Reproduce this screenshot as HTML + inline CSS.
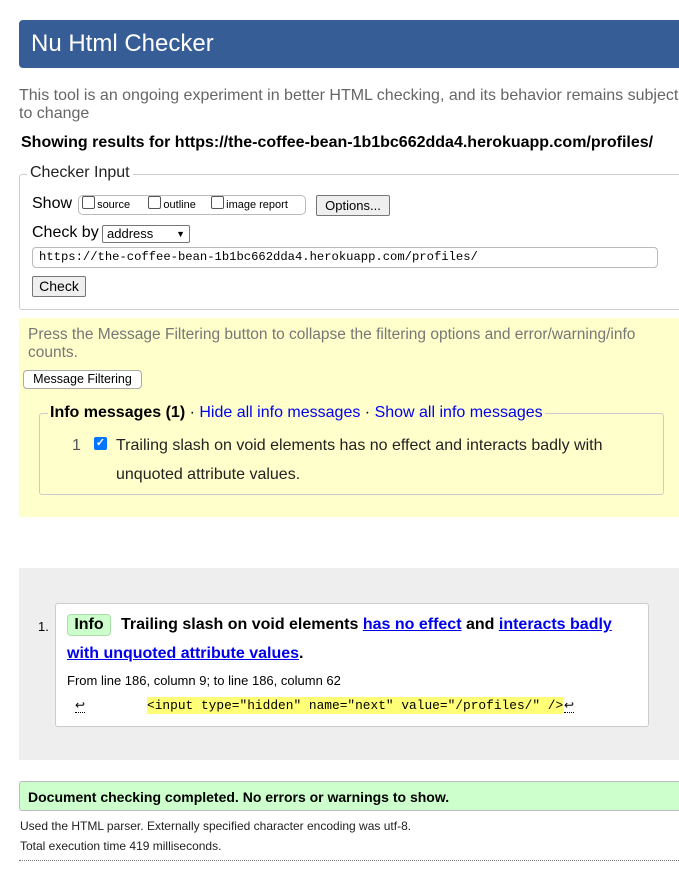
<!DOCTYPE html>
<html><head><meta charset="utf-8"><style>
body{margin:0;width:679px;height:880px;overflow:hidden;background:#fff;font-family:"Liberation Sans",Arial,sans-serif;position:relative;color:#000}
.a{position:absolute;white-space:nowrap}
.mono{font-family:"Liberation Mono",monospace}
.cb{display:inline-block;width:11px;height:11px;border:1px solid #555;border-radius:2px;background:#fff;vertical-align:-1px;margin-right:2px}
.btn{position:absolute;border:1px solid #767676;background:#efefef;border-radius:2px;font-size:13px;text-align:center}
a{color:#00e}
</style></head><body>
<div class="a" style="left:19px;top:20px;width:660px;height:48px;background:#365d95;border-radius:4px 0 0 4px"></div>
<div class="a" style="left:31px;top:30px;font-size:24px;color:#fff">Nu Html Checker</div>
<div class="a" style="left:19px;top:87px;font-size:16px;color:#666;line-height:18px">This tool is an ongoing experiment in better HTML checking, and its behavior remains subject<br>to change</div>
<div class="a" style="left:21px;top:134px;font-size:16px;font-weight:bold">Showing results for https://the-coffee-bean-1b1bc662dda4.herokuapp.com/profiles/</div>

<div class="a" style="left:19px;top:174px;width:670px;height:134px;border:1px solid #ccc;border-radius:3px"></div>
<div class="a" style="left:27px;top:164px;font-size:16px;background:#fff;padding:0 3px;color:#222">Checker Input</div>
<div class="a" style="left:32px;top:195px;font-size:16px">Show</div>
<div class="a" style="left:78px;top:195px;width:226px;height:18px;border:1px solid #bbb;border-radius:5px;font-size:11px;line-height:18px">&nbsp;<span class="cb"></span>source &nbsp;&nbsp;&nbsp;&nbsp;&nbsp;<span class="cb"></span>outline &nbsp;&nbsp;&nbsp;&nbsp;<span class="cb"></span>image report</div>
<div class="btn" style="left:316px;top:195px;width:72px;height:19px;line-height:19px">Options...</div>
<div class="a" style="left:32px;top:224px;font-size:16px">Check by</div>
<div class="a" style="left:102px;top:225px;width:82px;height:16px;border:1px solid #767676;border-radius:2px;font-size:13px;line-height:16px;padding-left:4px">address<span style="position:absolute;right:4px;font-size:9px">&#9660;</span></div>
<div class="a mono" style="left:32px;top:247px;width:618px;height:19px;border:1px solid #bbb;border-radius:4px;font-size:12.2px;line-height:19px;padding-left:6px">https://the-coffee-bean-1b1bc662dda4.herokuapp.com/profiles/</div>
<div class="btn" style="left:32px;top:276px;width:52px;height:19px;line-height:19px;font-size:14px">Check</div>

<div class="a" style="left:19px;top:318px;width:660px;height:199px;background:#ffffcc"></div>
<div class="a" style="left:28px;top:326px;font-size:15.5px;color:#777;line-height:18px">Press the Message Filtering button to collapse the filtering options and error/warning/info<br>counts.</div>
<div class="a" style="left:23px;top:370px;width:117px;height:17px;border:1px solid #aaa;border-radius:4px;background:#fff;font-size:12.5px;line-height:17px;text-align:center">Message Filtering</div>
<div class="a" style="left:39px;top:413px;width:623px;height:80px;border:1px solid #ccc;border-radius:3px"></div>
<div class="a" style="left:48px;top:404px;font-size:16px;background:#ffffcc;padding:0 2px"><b>Info messages (1)</b> · <span style="color:#00e">Hide all info messages</span> · <span style="color:#00e">Show all info messages</span></div>
<div class="a" style="left:72px;top:437px;font-size:16px;color:#555">1</div>
<div class="a" style="left:94px;top:437px;width:13px;height:13px;background:#0075ff;border-radius:2px;color:#fff;font-size:11px;line-height:13px;text-align:center;font-weight:bold">✓</div>
<div class="a" style="left:116px;top:431px;font-size:16px;line-height:29px;color:#222">Trailing slash on void elements has no effect and interacts badly with<br>unquoted attribute values.</div>

<div class="a" style="left:19px;top:568px;width:660px;height:192px;background:#eeeeee"></div>
<div class="a" style="left:55px;top:603px;width:592px;height:122px;background:#fff;border:1px solid #ccc;border-radius:3px"></div>
<div class="a" style="left:38px;top:619px;font-size:13px">1.</div>
<div class="a" style="left:67px;top:614px;width:42px;height:20px;background:#ccffcc;border:1px solid #aaddaa;border-radius:4px;font-size:16px;font-weight:bold;line-height:20px;text-align:center">Info</div>
<div class="a" style="left:121px;top:610px;font-size:16px;font-weight:bold;line-height:29px">Trailing slash on void elements <a href="#">has no effect</a> and <a href="#">interacts badly</a></div>
<div class="a" style="left:67px;top:639px;font-size:16px;font-weight:bold;line-height:29px"><a href="#">with unquoted attribute values</a>.</div>
<div class="a" style="left:67px;top:673px;font-size:13px">From line 186, column 9; to line 186, column 62</div>
<div class="a" style="left:75px;top:698px;font-size:12px;border-bottom:1px dotted #000">↩</div>
<div class="a mono" style="left:147px;top:697px;font-size:12.85px;background:#ffff77;line-height:17px">&lt;input type="hidden" name="next" value="/profiles/" /&gt;</div>
<div class="a" style="left:564px;top:698px;font-size:12px;border-bottom:1px dotted #000">↩</div>

<div class="a" style="left:19px;top:781px;width:670px;height:28px;background:#ccffcc;border:1px solid #bbb;border-radius:3px"></div>
<div class="a" style="left:28px;top:789px;font-size:14px;font-weight:bold">Document checking completed. No errors or warnings to show.</div>
<div class="a" style="left:20px;top:819px;font-size:12px;color:#222">Used the HTML parser. Externally specified character encoding was utf-8.</div>
<div class="a" style="left:20px;top:839px;font-size:12px;color:#222">Total execution time 419 milliseconds.</div>
<div class="a" style="left:19px;top:860px;width:660px;border-top:1px dotted #777"></div>
</body></html>
